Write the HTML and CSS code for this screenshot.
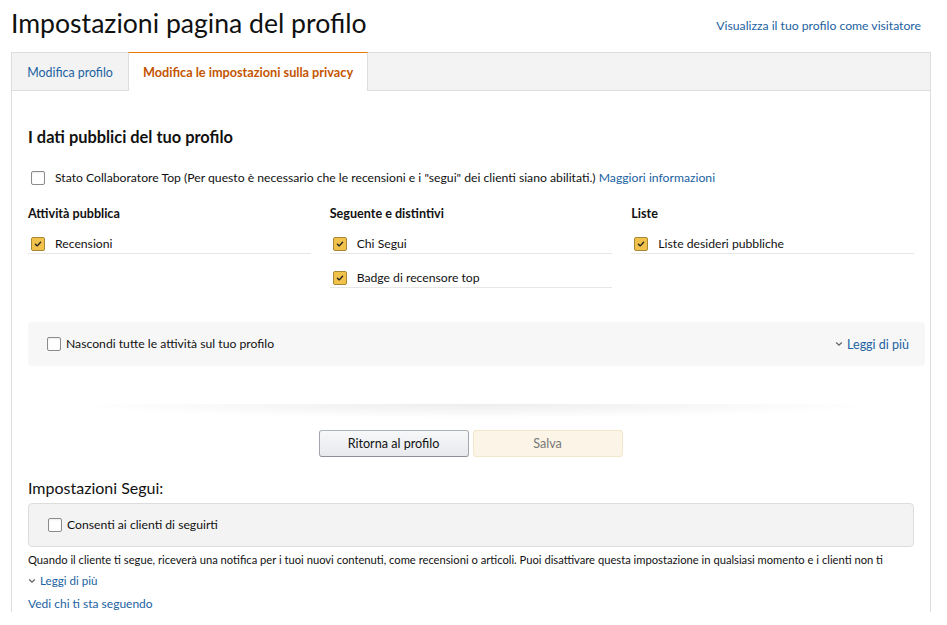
FILE: index.html
```html
<!DOCTYPE html>
<html lang="it">
<head>
<meta charset="utf-8">
<title>Impostazioni pagina del profilo</title>
<link rel="stylesheet" href="styles.css">
</head>
<body>
<div class="page">
  <header class="header">
    <h1 class="title">Impostazioni pagina del profilo</h1>
    <a class="link visitor" href="#">Visualizza il tuo profilo come visitatore</a>
  </header>
  <div class="card">
    <nav class="tabs">
      <a class="tab" href="#">Modifica profilo</a>
      <span class="tab tab-active">Modifica le impostazioni sulla privacy</span>
      <span class="tab-fill"></span>
    </nav>
    <div class="content">
      <h2 class="section-title">I dati pubblici del tuo profilo</h2>
      <label class="check-row top-row">
        <span class="cb"></span>
        <span>Stato Collaboratore Top (Per questo è necessario che le recensioni e i "segui" dei clienti siano abilitati.) <a class="link" href="#">Maggiori informazioni</a></span>
      </label>
      <div class="cols">
        <div class="col">
          <div class="col-title">Attività pubblica</div>
          <label class="item"><span class="cb cb-on"><svg viewBox="0 0 14 14" class="tick"><polyline points="4,7.2 6.2,9.2 10,5"/></svg></span><span>Recensioni</span></label>
        </div>
        <div class="col">
          <div class="col-title">Seguente e distintivi</div>
          <label class="item"><span class="cb cb-on"><svg viewBox="0 0 14 14" class="tick"><polyline points="4,7.2 6.2,9.2 10,5"/></svg></span><span>Chi Segui</span></label>
          <label class="item"><span class="cb cb-on"><svg viewBox="0 0 14 14" class="tick"><polyline points="4,7.2 6.2,9.2 10,5"/></svg></span><span>Badge di recensore top</span></label>
        </div>
        <div class="col">
          <div class="col-title">Liste</div>
          <label class="item"><span class="cb cb-on"><svg viewBox="0 0 14 14" class="tick"><polyline points="4,7.2 6.2,9.2 10,5"/></svg></span><span>Liste desideri pubbliche</span></label>
        </div>
      </div>
      <div class="hide-panel">
        <label class="check-row tight"><span class="cb"></span><span>Nascondi tutte le attività sul tuo profilo</span></label>
        <a class="link more" href="#"><svg class="chev" viewBox="0 0 8 6"><polyline points="1.2,1.5 4,4.2 6.8,1.5"/></svg>Leggi di più</a>
      </div>
      <div class="divider"></div>
      <div class="buttons">
        <button class="btn btn-back" type="button">Ritorna al profilo</button>
        <button class="btn btn-save" type="button" disabled>Salva</button>
      </div>
      <h3 class="follow-title">Impostazioni Segui:</h3>
      <div class="follow-box">
        <label class="check-row tight"><span class="cb"></span><span>Consenti ai clienti di seguirti</span></label>
      </div>
      <p class="follow-text">Quando il cliente ti segue, riceverà una notifica per i tuoi nuovi contenuti, come recensioni o articoli. Puoi disattivare questa impostazione in qualsiasi momento e i clienti non ti</p>
      <a class="link more small" href="#"><svg class="chev" viewBox="0 0 8 6"><polyline points="1.2,1.5 4,4.2 6.8,1.5"/></svg>Leggi di più</a>
      <a class="link followers" href="#">Vedi chi ti sta seguendo</a>
    </div>
  </div>
</div>
</body>
</html>
```
FILE: styles.css
```css
* { box-sizing: border-box; }
html, body { margin: 0; padding: 0; background: #fff; }
body {
  font-family: Lato, "Noto Sans", "Liberation Sans", sans-serif;
  font-size: 12.2px;
  color: #111;
}
.page { padding: 0 16px 0 11px; }
.link { color: #2162a1; text-decoration: none; }

.header {
  height: 52px;
  display: flex;
  align-items: center;
  justify-content: space-between;
}
.title {
  margin: 0;
  font-size: 26.6px;
  font-weight: 400;
  color: #0f1111;
  line-height: 30px;
  padding-bottom: 6px;
}
.visitor { font-size: 12.2px; margin-right: 10px; padding-bottom: 2px; }

.card { border: 1px solid #ddd; border-bottom: none; }
.tabs {
  display: flex;
  height: 38px;
  background: #f3f3f3;
  border-bottom: 1px solid #ddd;
}
.tab {
  display: flex;
  align-items: center;
  justify-content: center;
  height: 38px;
  font-size: 12.4px;
}
.tabs a.tab { width: 116px; color: #2162a1; text-decoration: none; }
.tab-active {
  width: 240px;
  background: #fff;
  border-top: 1px solid #e77600;
  border-left: 1px solid #ddd;
  border-right: 1px solid #ddd;
  margin-top: -1px;
  height: 39px;
  color: #c45500;
  font-weight: 700;
  font-size: 12.7px;
}
.tab-fill { flex: 1; }

.content { padding: 0 5px 0 16px; }
.section-title {
  margin: 36px 0 0;
  font-size: 16.4px;
  font-weight: 700;
  line-height: 20px;
}
.check-row {
  display: flex;
  align-items: center;
  line-height: 20px;
}
.top-row { margin: 21px 0 0 3px; gap: 10px; }
.cb {
  flex: none;
  width: 14px;
  height: 14px;
  border: 1px solid #888c8c;
  border-radius: 2px;
  background: #fff;
  box-shadow: inset 0 1px 2px rgba(0,0,0,.08);
}
.cb-on {
  background: #f0c14b;
  border-color: #a88734;
  box-shadow: none;
}
.tick { display: block; width: 12px; height: 12px; }
.tick polyline { fill: none; stroke: #222; stroke-width: 1.6; stroke-linecap: round; stroke-linejoin: round; }

.cols {
  display: grid;
  grid-template-columns: repeat(3, 1fr);
  column-gap: 19px;
  margin: 17px 11px 0 0;
}
.col-title { font-weight: 700; font-size: 12.6px; line-height: 12px; height: 12px; margin-top: 3px; }
.item {
  display: flex;
  align-items: center;
  gap: 10px;
  padding: 14px 0 0 3px;
  height: 34px;
  line-height: 20px;
  border-bottom: 1px solid #e7e7e7;
}

.hide-panel {
  margin-top: 34px;
  height: 44px;
  background: #f7f7f7;
  display: flex;
  align-items: center;
  justify-content: space-between;
  padding: 0 16px 0 19px;
  border-radius: 3px;
}
.tight { gap: 5px; }
.more { display: inline-flex; align-items: center; gap: 4px; font-size: 12.5px; }
.chev { width: 8px; height: 6px; }
.chev polyline { fill: none; stroke: #666; stroke-width: 1.3; }

.divider {
  margin: 38px auto 0;
  height: 14px;
  width: 90%;
  background: radial-gradient(ellipse 50% 100% at 50% 0%, rgba(0,0,0,.07), rgba(0,0,0,0) 100%);
}
.buttons {
  display: flex;
  justify-content: center;
  gap: 4px;
  margin-top: 12px;
  padding-right: 12px;
}
.btn {
  width: 150px;
  height: 27px;
  font-family: inherit;
  font-size: 12.6px;
  border-radius: 3px;
  cursor: pointer;
}
.btn-back {
  color: #111;
  background: linear-gradient(#f7f8fa, #e7e9ec);
  border: 1px solid;
  border-color: #adb1b8 #a2a6ac #8d9096;
}
.btn-save {
  color: #777;
  background: #fcf4e6;
  border: 1px solid #f2e6cb;
}

.follow-title {
  margin: 21px 0 0;
  font-size: 16px;
  font-weight: 400;
  line-height: 20px;
}
.follow-box {
  margin: 5px 11px 0 0;
  height: 44px;
  background: #f3f3f3;
  border: 1px solid #ddd;
  border-radius: 4px;
  display: flex;
  align-items: center;
  padding-left: 19px;
}
.follow-text {
  margin: 5px 0 0;
  font-size: 11.2px;
  line-height: 16px;
  white-space: nowrap;
}
.small { font-size: 11.6px; margin-top: 6px; }
.followers { display: block; margin-top: 9px; font-size: 12px; line-height: 16px; }
```
